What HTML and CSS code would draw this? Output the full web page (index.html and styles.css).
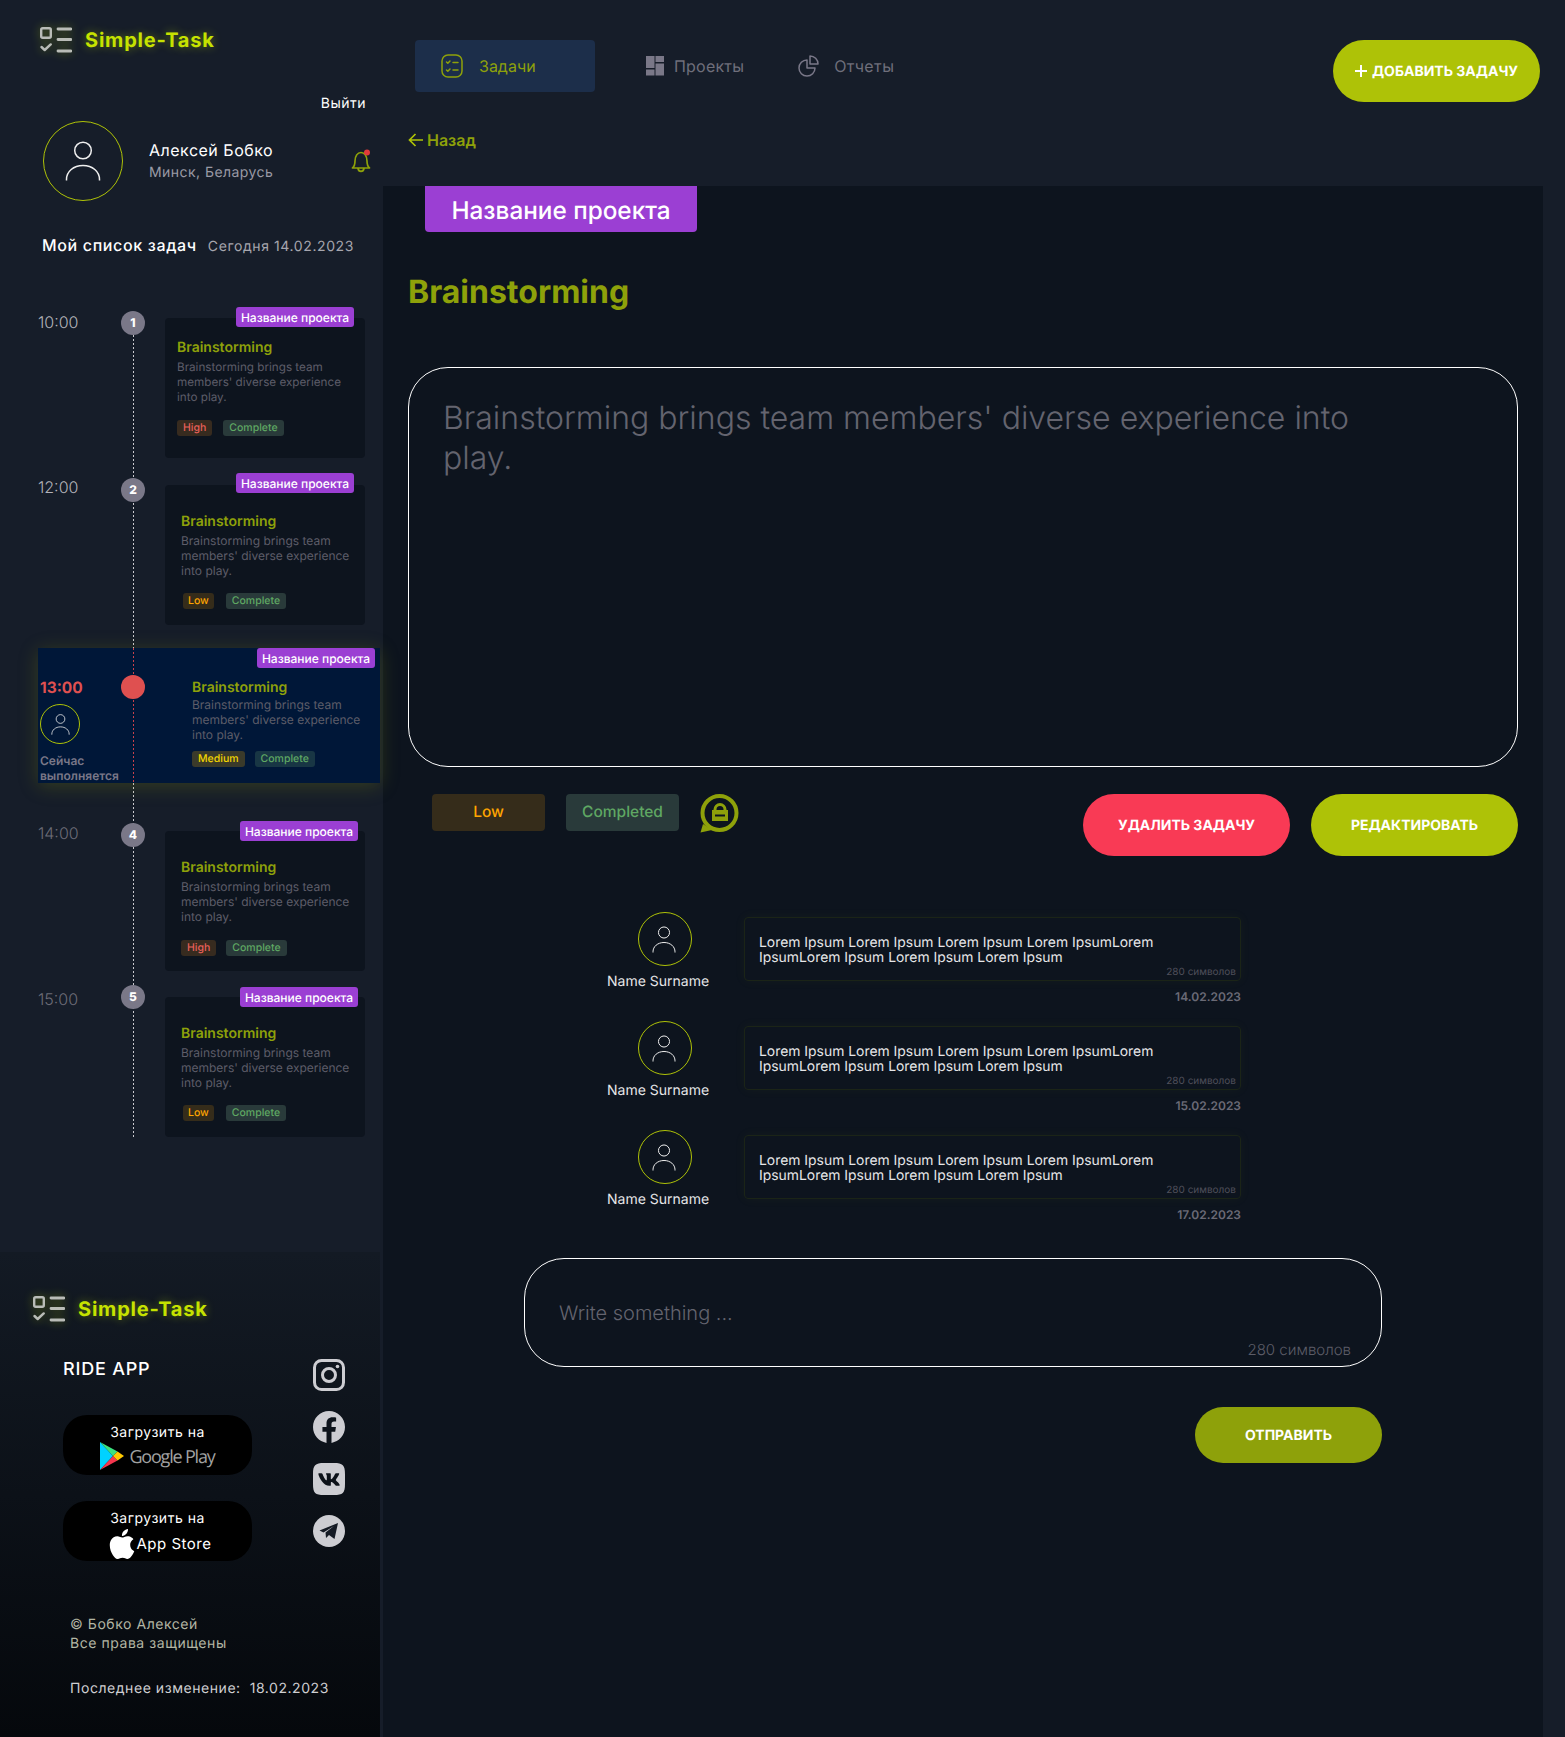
FILE: index.html
```html
<!DOCTYPE html>
<html lang="ru">
<head>
<meta charset="UTF-8">
<title>Simple-Task</title>
<link rel="stylesheet" href="styles.css">
</head>
<body>
<svg class="defs" width="0" height="0">
  <symbol id="i-logo" viewBox="0 0 32 26">
    <rect x="1.2" y="1.2" width="9.6" height="9.6" rx="1.5" fill="none" stroke="currentColor" stroke-width="2.4"/>
    <path d="M1.5 20l3.2 3 6-5.6" fill="none" stroke="currentColor" stroke-width="2.4" stroke-linecap="round" stroke-linejoin="round"/>
    <path d="M18 2h13M18 12.5h13M18 24h13" stroke="currentColor" stroke-width="2.8" stroke-linecap="round"/>
  </symbol>
  <symbol id="i-user" viewBox="0 0 36 40">
    <circle cx="18" cy="9.5" r="8.3" fill="none" stroke="currentColor" stroke-width="1.5"/>
    <path d="M1.5 39.5v-1c0-8 7-14 16.5-14s16.5 6 16.5 14v1" fill="none" stroke="currentColor" stroke-width="1.5"/>
  </symbol>
</svg>

<div class="page">
  <aside class="sidebar">
    <div class="logo logo-top">
      <svg class="logo-icon"><use href="#i-logo"/></svg>
      <span class="logo-text">Simple-Task</span>
    </div>
    <a class="logout">Выйти</a>
    <div class="user">
      <div class="avatar avatar-lg"><svg><use href="#i-user"/></svg></div>
      <div class="user-info">
        <div class="user-name">Алексей Бобко</div>
        <div class="user-city">Минск, Беларусь</div>
      </div>
      <svg class="bell" viewBox="0 0 20 24">
        <path d="M1.5 19c1.8-1.500 2.500-3.500 2.500-7C4 7 6.500 3.500 10 3.500s6 3.500 6 8.500c0 3.500.7 5.500 2.500 7zM7 19.500c.3 1.800 1.500 2.800 3 2.800s2.700-1 3-2.800" fill="none" stroke="#8ea10a" stroke-width="1.700" stroke-linejoin="round"/>
        <circle cx="16" cy="3.500" r="3" fill="#e23a3a"/>
      </svg>
    </div>
    <div class="today">
      <span class="today-title">Мой список задач</span>
      <span class="today-date">Сегодня 14.02.2023</span>
    </div>

    <div class="timeline">
      <div class="tl-row tl-row-1">
        <div class="tl-time">10:00</div>
        <div class="tl-dot">1</div>
        <div class="card card-tight">
          <span class="tag">Название проекта</span>
          <div class="card-title">Brainstorming</div>
          <p class="card-text">Brainstorming brings team members' diverse experience into play.</p>
          <div class="chips"><span class="chip chip-high">High</span><span class="chip chip-done">Complete</span></div>
        </div>
      </div>

      <div class="tl-row tl-row-2">
        <div class="tl-time">12:00</div>
        <div class="tl-dot">2</div>
        <div class="card">
          <span class="tag">Название проекта</span>
          <div class="card-title">Brainstorming</div>
          <p class="card-text">Brainstorming brings team members' diverse experience into play.</p>
          <div class="chips"><span class="chip chip-low">Low</span><span class="chip chip-done">Complete</span></div>
        </div>
      </div>

      <div class="tl-now">
        <span class="tag">Название проекта</span>
        <div class="now-left">
          <div class="now-time">13:00</div>
          <div class="avatar avatar-sm"><svg><use href="#i-user"/></svg></div>
          <div class="now-label">Сейчас выполняется</div>
        </div>
        <div class="now-dot"></div>
        <div class="now-body">
          <div class="card-title">Brainstorming</div>
          <p class="card-text">Brainstorming brings team members' diverse experience into play.</p>
          <div class="chips"><span class="chip chip-medium">Medium</span><span class="chip chip-done-now">Complete</span></div>
        </div>
      </div>

      <div class="tl-row tl-row-4">
        <div class="tl-time tl-time-dim">14:00</div>
        <div class="tl-dot">4</div>
        <div class="card">
          <span class="tag tag-r">Название проекта</span>
          <div class="card-title">Brainstorming</div>
          <p class="card-text">Brainstorming brings team members' diverse experience into play.</p>
          <div class="chips"><span class="chip chip-high">High</span><span class="chip chip-done">Complete</span></div>
        </div>
      </div>

      <div class="tl-row tl-row-5">
        <div class="tl-time tl-time-dim">15:00</div>
        <div class="tl-dot">5</div>
        <div class="card">
          <span class="tag tag-r">Название проекта</span>
          <div class="card-title">Brainstorming</div>
          <p class="card-text">Brainstorming brings team members' diverse experience into play.</p>
          <div class="chips"><span class="chip chip-low">Low</span><span class="chip chip-done">Complete</span></div>
        </div>
      </div>
    </div>

    <footer class="footer">
      <div class="logo logo-bottom">
        <svg class="logo-icon"><use href="#i-logo"/></svg>
        <span class="logo-text">Simple-Task</span>
      </div>
      <div class="footer-main">
        <div class="footer-apps">
          <div class="ride">RIDE APP</div>
          <a class="store">
            <span class="store-top">Загрузить на</span>
            <span class="store-name">
              <svg class="gp-icon" viewBox="0 0 24 28">
                <path d="M0 0l13 14L0 28z" fill="#00d2ff"/>
                <path d="M0 0l17.500 9.500L13 14z" fill="#3be37f"/>
                <path d="M0 28l17.500-9.500L13 14z" fill="#f5364f"/>
                <path d="M17.500 9.500L24 14l-6.500 4.500L13 14z" fill="#ffc900"/>
              </svg>
              <span class="gp-text">Google Play</span>
            </span>
          </a>
          <a class="store store-apple">
            <span class="store-top">Загрузить на</span>
            <span class="store-name">
              <svg class="apple-icon" viewBox="0 0 24 24"><path fill="#fff" d="M12.152 6.896c-.948 0-2.415-1.078-3.960-1.040-2.040.027-3.910 1.183-4.961 3.014-2.117 3.675-.546 9.103 1.519 12.090 1.013 1.454 2.208 3.090 3.792 3.039 1.520-.065 2.090-.987 3.935-.987 1.831 0 2.350.987 3.960.948 1.637-.026 2.676-1.480 3.676-2.948 1.156-1.688 1.636-3.325 1.662-3.415-.039-.013-3.182-1.221-3.220-4.857-.026-3.040 2.480-4.494 2.597-4.559-1.429-2.090-3.623-2.324-4.390-2.376-2-.156-3.675 1.090-4.610 1.090zM15.530 3.830c.843-1.012 1.400-2.427 1.245-3.830-1.207.052-2.662.805-3.532 1.818-.780.896-1.454 2.338-1.273 3.714 1.338.104 2.715-.688 3.559-1.701"/></svg>
              <span class="as-text">App Store</span>
            </span>
          </a>
        </div>
        <div class="social">
          <svg viewBox="0 0 32 32">
            <rect x="1.500" y="1.500" width="29" height="29" rx="7" fill="none" stroke="#cdcdd2" stroke-width="3"/>
            <circle cx="16" cy="16" r="6.500" fill="none" stroke="#cdcdd2" stroke-width="3"/>
            <circle cx="24.500" cy="7.500" r="1.800" fill="#cdcdd2"/>
          </svg>
          <svg viewBox="0 0 24 24"><path fill="#cdcdd2" d="M24 12.073c0-6.627-5.373-12-12-12s-12 5.373-12 12c0 5.990 4.388 10.954 10.125 11.854v-8.385H7.078v-3.470h3.047V9.430c0-3.007 1.792-4.669 4.533-4.669 1.312 0 2.686.235 2.686.235v2.953H15.830c-1.491 0-1.956.925-1.956 1.874v2.250h3.328l-.532 3.470h-2.796v8.385C19.612 23.027 24 18.062 24 12.073z"/></svg>
          <svg viewBox="0 0 24 24"><path fill="#cdcdd2" d="M15.684 0H8.316C1.592 0 0 1.592 0 8.316v7.368C0 22.408 1.592 24 8.316 24h7.368C22.408 24 24 22.408 24 15.684V8.316C24 1.592 22.391 0 15.684 0zm3.692 17.123h-1.744c-.660 0-.864-.525-2.050-1.727-1.033-1-1.490-1.135-1.744-1.135-.356 0-.458.102-.458.593v1.575c0 .424-.135.678-1.253.678-1.846 0-3.896-1.118-5.335-3.202C4.624 10.857 4.030 8.570 4.030 8.096c0-.254.102-.491.593-.491h1.744c.440 0 .610.203.780.677.863 2.490 2.303 4.675 2.896 4.675.220 0 .322-.102.322-.660V9.721c-.068-1.186-.695-1.287-.695-1.710 0-.204.170-.407.440-.407h2.744c.373 0 .508.203.508.643v3.473c0 .372.170.508.271.508.220 0 .407-.136.813-.542 1.254-1.406 2.151-3.574 2.151-3.574.119-.254.322-.491.763-.491h1.744c.525 0 .644.270.525.643-.220 1.017-2.354 4.031-2.354 4.031-.186.305-.254.440 0 .780.186.254.796.779 1.203 1.253.745.847 1.320 1.558 1.473 2.050.170.490-.085.744-.576.744z"/></svg>
          <svg viewBox="0 0 32 32">
            <circle cx="16" cy="16" r="16" fill="#cdcdd2"/>
            <path d="M6.500 15.500L25 8l-3.500 16-5.500-4-3 3-.5-5.500L21 11l-10.500 6.500z" fill="#141a24"/>
          </svg>
        </div>
      </div>
      <p class="copy">© Бобко Алексей<br>Все права защищены</p>
      <p class="changed">Последнее изменение:&nbsp; 18.02.2023</p>
    </footer>
  </aside>

  <main class="main">
    <header class="topbar">
      <div class="topbar-row">
        <nav class="nav">
          <a class="nav-tab">
            <svg class="nav-ic-tasks" viewBox="0 0 22 24" fill="none" stroke="#8ea10a" stroke-width="1.500" stroke-linecap="round" stroke-linejoin="round">
              <rect x="1" y="1" width="20" height="22" rx="6"/>
              <path d="M5.500 8l1.300 1.300L9 7M5.500 16l1.300 1.300L9 15M12 8.500h5M12 16h5"/>
            </svg>
            <span>Задачи</span>
          </a>
          <a class="nav-link nav-link-projects">
            <svg class="nav-ic-grid" viewBox="0 0 18 20" fill="#7a7888">
              <rect width="8.500" height="12"/><rect x="9.500" width="8.500" height="6"/>
              <rect y="13.500" width="8.500" height="6"/><rect x="9.500" y="7.500" width="8.500" height="12"/>
            </svg>
            <span>Проекты</span>
          </a>
          <a class="nav-link nav-link-reports">
            <svg class="nav-ic-pie" viewBox="0 0 21 22" fill="none" stroke="#7a7888" stroke-width="1.500" stroke-linejoin="round">
              <path d="M9 5A8 8 0 1 0 17 13H9z"/>
              <path d="M12 1a8 8 0 0 1 8 8h-8z"/>
            </svg>
            <span>Отчеты</span>
          </a>
        </nav>
        <a class="btn btn-add">
          <svg class="plus" viewBox="0 0 12 12"><path d="M6 0v12M0 6h12" stroke="#fff" stroke-width="2"/></svg>
          Добавить задачу
        </a>
      </div>
      <a class="back">
        <svg viewBox="0 0 15 14" fill="none" stroke="#aec207" stroke-width="1.700"><path d="M15 7H1.500M7.500 1l-6 6 6 6"/></svg>
        Назад
      </a>
    </header>

    <section class="panel">
      <div class="project-tag">Название проекта</div>
      <h1 class="task-title">Brainstorming</h1>
      <div class="task-desc">Brainstorming brings team members' diverse experience into play.</div>

      <div class="actions">
        <span class="status status-low">Low</span>
        <span class="status status-done">Completed</span>
        <svg class="lock-chat" viewBox="0 0 39 39">
          <circle cx="19.500" cy="19" r="17" fill="none" stroke="#8ea10a" stroke-width="4"/>
          <path d="M3 30L.5 38.500 12 36z" fill="#8ea10a"/>
          <path d="M15 16v-.5a5 5 0 0 1 10 0v.5" fill="none" stroke="#8ea10a" stroke-width="3"/>
          <path fill-rule="evenodd" d="M12 16h16v11H12zM15 20.500v2h10v-2z" fill="#8ea10a"/>
        </svg>
        <div class="actions-right">
          <a class="btn btn-del">Удалить задачу</a>
          <a class="btn btn-edit">Редактировать</a>
        </div>
      </div>

      <div class="comment">
        <div class="comment-author">
          <div class="avatar avatar-md"><svg><use href="#i-user"/></svg></div>
          <div class="comment-name">Name Surname</div>
        </div>
        <div class="comment-main">
          <div class="bubble">Lorem Ipsum Lorem Ipsum Lorem Ipsum Lorem IpsumLorem IpsumLorem Ipsum Lorem Ipsum Lorem Ipsum<span class="bubble-count">280 символов</span></div>
          <div class="comment-date">14.02.2023</div>
        </div>
      </div>
      <div class="comment">
        <div class="comment-author">
          <div class="avatar avatar-md"><svg><use href="#i-user"/></svg></div>
          <div class="comment-name">Name Surname</div>
        </div>
        <div class="comment-main">
          <div class="bubble">Lorem Ipsum Lorem Ipsum Lorem Ipsum Lorem IpsumLorem IpsumLorem Ipsum Lorem Ipsum Lorem Ipsum<span class="bubble-count">280 символов</span></div>
          <div class="comment-date">15.02.2023</div>
        </div>
      </div>
      <div class="comment">
        <div class="comment-author">
          <div class="avatar avatar-md"><svg><use href="#i-user"/></svg></div>
          <div class="comment-name">Name Surname</div>
        </div>
        <div class="comment-main">
          <div class="bubble">Lorem Ipsum Lorem Ipsum Lorem Ipsum Lorem IpsumLorem IpsumLorem Ipsum Lorem Ipsum Lorem Ipsum<span class="bubble-count">280 символов</span></div>
          <div class="comment-date">17.02.2023</div>
        </div>
      </div>

      <div class="compose">
        <div class="compose-box">
          <span class="compose-hint">Write something ...</span>
          <span class="compose-count">280 символов</span>
        </div>
        <a class="btn btn-send">Отправить</a>
      </div>
    </section>
  </main>
</div>
</body>
</html>
```

FILE: styles.css
```css
* { margin: 0; padding: 0; box-sizing: border-box; }
body { background: #161d29; color: #fff; font-family: "Inter", "Liberation Sans", sans-serif; text-rendering: geometricPrecision; }
a { color: inherit; text-decoration: none; }
svg { display: block; }
.defs { position: absolute; }

.page { display: flex; min-height: 100vh; }

/* sidebar */
.sidebar { width: 383px; flex: none; display: flex; flex-direction: column; }

.logo { display: flex; align-items: center; }
.logo-icon { width: 32px; height: 26px; color: #b9bcb7; margin-right: 13px; filter: drop-shadow(0 0 5px rgba(190, 225, 0, .45)); }
.logo-text { font-size: 20px; font-weight: 700; letter-spacing: .8px; line-height: 26px; color: #c6e200; text-shadow: 0 0 10px rgba(190, 225, 0, .45); }
.logo-top { margin: 27px 0 0 40px; }

.logout { align-self: flex-end; margin: 41px 17px 0 0; font-size: 14px; line-height: 20px; letter-spacing: .5px; }

.user { display: flex; align-items: center; margin: 7px 0 0 43px; }
.avatar { border-radius: 50%; border: 1px solid #aec207; display: flex; align-items: center; justify-content: center; color: #eee; flex: none; }
.avatar-lg { width: 80px; height: 80px; }
.avatar-lg svg { width: 36px; height: 40px; }
.avatar-sm { width: 40px; height: 40px; }
.avatar-sm svg { width: 19px; height: 21px; }
.avatar-md { width: 54px; height: 54px; }
.avatar-md svg { width: 24px; height: 27px; margin-right: 2px; }
.user-info { margin-left: 26px; width: 202px; }
.user-name { font-size: 16px; line-height: 22px; letter-spacing: .5px; }
.user-city { font-size: 14px; line-height: 22px; letter-spacing: .45px; color: #9a9aa5; margin-top: 1px; }
.bell { width: 20px; height: 24px; margin-top: -1px; }

.today { display: flex; align-items: baseline; margin: 33px 0 0 42px; }
.today-title { font-size: 16px; font-weight: 500; letter-spacing: .65px; line-height: 22px; }
.today-date { font-size: 14px; letter-spacing: .6px; color: #a6a6ae; margin-left: 11px; }

/* timeline */
.timeline { position: relative; margin-top: 55px; }
.timeline::before { content: ""; position: absolute; left: 133px; top: 24px; bottom: 0; width: 1px; background: repeating-linear-gradient(to bottom, #c9c9ce 0 2px, transparent 2px 4px); }

.tl-row { display: flex; align-items: flex-start; padding-left: 38px; position: relative; }
.tl-row-2 { margin-top: 20px; }
.tl-row-4 { margin-top: 40px; }
.tl-row-5 { margin-top: 14px; }
.tl-time { width: 83px; font-size: 16px; font-weight: 300; line-height: 22px; color: #b3b3ba; }
.tl-row-2 .tl-time { margin-top: -2px; }
.tl-row-4 .tl-time { margin-top: -1px; }
.tl-row-5 .tl-time { margin-top: 3px; }
.tl-time-dim { color: #6c6c77; }
.tl-dot { width: 24px; height: 24px; border-radius: 50%; background: #7a7888; font-size: 12px; font-weight: 800; line-height: 24px; text-align: center; margin-right: 20px; position: relative; }

.card { width: 200px; height: 140px; margin-top: 7px; background: #0d141e; border-radius: 4px; padding: 28px 16px 0; position: relative; }
.card-tight { padding: 21px 12px 0; }
.tl-row-4 .card { margin-top: 8px; }
.tl-row-5 .card { margin-top: 12px; }
.card-title { font-size: 14px; font-weight: 600; line-height: 18px; color: #8ea10a; }
.card-text { font-size: 12px; line-height: 15px; color: #5d5d69; margin-top: 2px; width: 176px; }
.card-tight .card-text { font-size: 11.7px; margin-top: 3px; }
.chips { display: flex; margin-top: 15px; }
.card-tight .chips { margin-top: 15px; }
.tl-row-4 .chips { margin-top: 16px; }
.chip { height: 16px; padding: 0 6px; border-radius: 3px; font-size: 10.5px; font-weight: 500; line-height: 16px; }
.chip-high { background: #372b1f; color: #e9605a; margin-right: 10px; }
.card-tight .chip-high { margin-right: 11px; }
.chip-low { background: #352c1a; color: #ffa500; padding: 0 5px; margin: 0 12px 0 2px; }
.chip-medium { background: #3a3a2a; color: #f2d500; margin-right: 10px; }
.chip-done { background: #293a3a; color: #5fa863; }
.chip-done-now { background: #183644; color: #5fa863; }

.tag { position: absolute; top: -11px; right: 11px; width: 118px; height: 20px; background: #9b3fd3; color: #fff; border-radius: 3px; font-size: 12px; font-weight: 500; line-height: 21px; text-align: center; }
.tl-row-2 .tag { top: -12px; }
.tag-r { top: -10px; right: 7px; }

.tl-now { position: relative; display: flex; width: 342px; height: 135px; margin: 23px 0 0 38px; background: #001738; box-shadow: 0 3px 18px rgba(142, 161, 10, .25); }
.tl-now::before { content: ""; position: absolute; left: 95px; top: 0; bottom: 0; width: 1px; background: repeating-linear-gradient(to bottom, #c9424a 0 2px, transparent 2px 4px); }
.tl-now .tag { top: 0; right: 5px; }
.now-left { width: 83px; padding: 29px 0 0 2px; }
.now-time { font-size: 15.5px; font-weight: 700; line-height: 22px; color: #df5050; }
.avatar-sm { margin-top: 5px; }
.now-label { font-size: 12px; font-weight: 600; line-height: 15px; color: #7a7888; width: 90px; margin-top: 9px; position: relative; }
.now-dot { width: 24px; height: 24px; border-radius: 50%; background: #df5050; margin-top: 27px; position: relative; }
.now-body { margin-left: 47px; padding-top: 31px; }
.now-body .card-text { margin-top: 0; }
.now-body .chips { margin: 9px 0 0; }

/* sidebar footer */
.footer { width: 380px; height: 485px; margin-top: auto; background: linear-gradient(#131a24, #05080c); padding-top: 44px; }
.logo-bottom { margin-left: 33px; }
.footer-main { display: flex; margin: 37px 0 0 63px; }
.footer-apps { width: 250px; }
.ride { font-size: 18px; font-weight: 500; line-height: 22px; letter-spacing: .8px; }
.store { display: flex; flex-direction: column; align-items: center; width: 189px; height: 60px; background: #000; border-radius: 24px; margin-top: 34px; padding-top: 8px; }
.store-apple { margin-top: 26px; }
.store-top { font-size: 14px; line-height: 20px; letter-spacing: .5px; }
.store-name { display: flex; align-items: center; }
.store-apple .store-name { padding-left: 6px; }
.gp-icon { width: 24px; height: 28px; margin-right: 5px; margin-top: -1px; }
.gp-text { font-family: "Open Sans", sans-serif; font-size: 18px; letter-spacing: -1.2px; color: #a2a2a2; line-height: 26px; }
.apple-icon { width: 30px; height: 30px; margin: 0 0 0 -3px; }
.as-text { font-size: 15px; letter-spacing: .5px; line-height: 24px; }
.social { display: flex; flex-direction: column; gap: 20px; }
.social svg { width: 32px; height: 32px; }
.copy { margin: 54px 0 0 70px; font-size: 14px; line-height: 19px; letter-spacing: .55px; color: #b3b6a4; }
.changed { margin: 26px 0 0 70px; font-size: 14px; line-height: 19px; letter-spacing: .55px; color: #cfcfd2; }

/* main */
.main { flex: 1; display: flex; flex-direction: column; }
.topbar { height: 186px; padding-top: 40px; }
.topbar-row { display: flex; align-items: flex-start; padding: 0 25px 0 32px; }
.nav { display: flex; align-items: center; height: 52px; }
.nav-tab { display: flex; align-items: center; width: 180px; height: 52px; background: #1c2e4a; border-radius: 4px; padding-left: 26px; color: #8ea10a; font-size: 16px; }
.nav-ic-tasks { width: 22px; height: 24px; margin-right: 16px; }
.nav-link { display: flex; align-items: center; font-size: 16px; letter-spacing: .2px; color: #6f6f7b; }
.nav-link-projects { margin-left: 51px; }
.nav-link-reports { margin-left: 54px; letter-spacing: .4px; }
.nav-ic-grid { width: 18px; height: 20px; margin-right: 10px; }
.nav-ic-pie { width: 21px; height: 22px; margin-right: 15px; }
.plus { width: 12px; height: 12px; margin-right: 5px; }

.btn { display: flex; align-items: center; justify-content: center; width: 207px; height: 62px; border-radius: 31px; font-size: 14px; font-weight: 700; color: #fff; text-transform: uppercase; }
.btn-add { margin-left: auto; background: #aec207; }
.btn-del { background: #f93a55; }
.btn-edit { background: #aec207; }
.btn-send { align-self: flex-end; width: 187px; height: 56px; margin-top: 40px; background: #8ea10a; }

.back { display: flex; align-items: center; width: max-content; margin: 28px 0 0 25px; font-size: 16px; font-weight: 600; line-height: 20px; color: #8ea10a; }
.back svg { width: 15px; height: 14px; margin-right: 4px; }

.panel { flex: 1; margin-right: 22px; padding: 0 25px; background: #0d141e; }
.project-tag { width: 272px; height: 46px; margin-left: 17px; background: #9b3fd3; border-radius: 0 0 4px 4px; font-size: 24.3px; font-weight: 500; line-height: 49px; text-align: center; }
.task-title { margin-top: 40px; font-size: 32px; font-weight: 700; line-height: 40px; color: #8ea10a; }
.task-desc { height: 400px; margin-top: 55px; padding: 30px 120px 0 34px; border: 1px solid #fff; border-radius: 40px; font-size: 32px; font-weight: 300; line-height: 40px; color: #64646f; }

.actions { display: flex; align-items: flex-start; margin-top: 27px; }
.status { width: 113px; height: 37px; border-radius: 4px; font-size: 15.5px; font-weight: 500; line-height: 36px; text-align: center; }
.status-low { margin-left: 24px; background: #352c1a; color: #ffa500; }
.status-done { margin-left: 21px; background: #293a3a; color: #5fa863; }
.lock-chat { width: 39px; height: 39px; margin-left: 21px; }
.actions-right { display: flex; gap: 21px; margin-left: auto; }

.comment { display: flex; margin: 16px 0 0 199px; }
.actions + .comment { margin-top: 56px; }
.comment-author { width: 137px; }
.avatar-md { margin-left: 31px; }
.comment-name { margin-top: 7px; font-size: 14px; line-height: 18px; color: #e6e6e8; }
.comment-main { width: 497px; padding-top: 5px; }
.bubble { position: relative; height: 64px; padding: 18px 14px 0; border: 1px solid #1b2417; border-radius: 4px; box-shadow: 0 0 12px rgba(142, 161, 10, .06); font-size: 13.9px; line-height: 15px; color: #e6e6e8; }
.bubble-count { position: absolute; right: 4px; bottom: 2px; font-size: 10px; line-height: 12px; color: #4f4f5a; }
.comment-date { margin-top: 8px; text-align: right; font-size: 12px; font-weight: 600; line-height: 16px; color: #6a6a76; }

.compose { display: flex; flex-direction: column; width: 858px; margin: 35px 0 0 116px; }
.compose-box { display: flex; flex-direction: column; height: 109px; padding: 42px 30px 0 34px; border: 1px solid #fff; border-radius: 40px; }
.compose-hint { font-size: 20px; font-weight: 300; line-height: 24px; color: #64646f; }
.compose-count { align-self: flex-end; margin-top: 16px; font-size: 15px; font-weight: 300; line-height: 18px; color: #5c5c67; }
```
